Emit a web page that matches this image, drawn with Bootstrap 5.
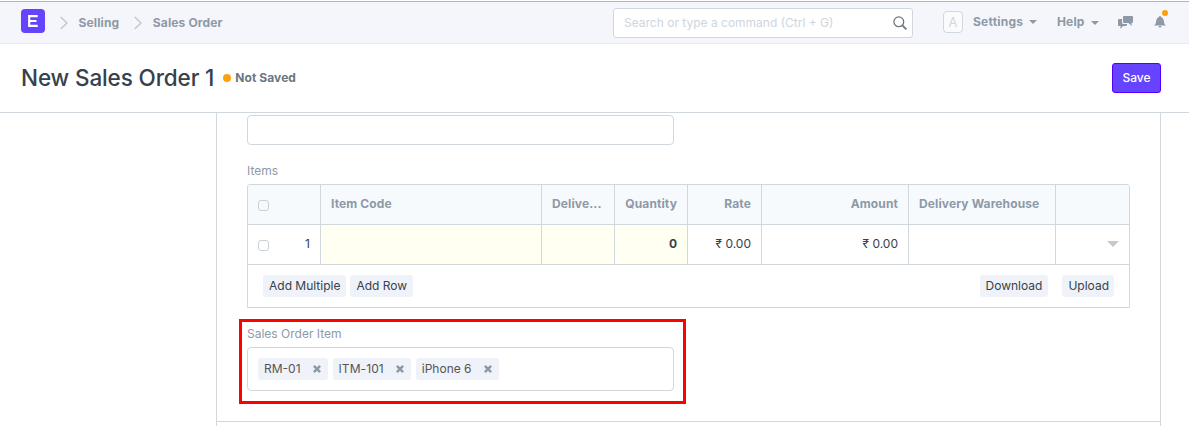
<!DOCTYPE html>
<html lang="en">
<head>
<meta charset="utf-8">
<meta name="viewport" content="width=device-width, initial-scale=1">
<title>New Sales Order 1</title>
<link href="https://cdn.jsdelivr.net/npm/bootstrap@5.3.0/dist/css/bootstrap.min.css" rel="stylesheet">
<style>
  :root { --line: #d1d8dd; --muted: #8d99a6; --ink: #36414c; --brand: #6644ff; }
  body { font: 12px/18px Inter, "Noto Sans", sans-serif; color: var(--ink); height: 426px; overflow: hidden; background: #fff; }
  .topbar { height: 43px; margin-top: 1px; padding: 0; border-top: 1px solid #b4b4b6; border-bottom: 1px solid #e8eaf0; background: #f5f6fb; flex-wrap: nowrap; font-weight: 700; color: var(--muted); }
  .logo { display: block; margin: -3px 15px 0 21px; }
  .crumb-link { color: inherit; text-decoration: none; letter-spacing: .14px; }
  .search-box { width: 300px; height: 30px; margin-right: 30px; border: 1px solid var(--line); border-radius: 3px; background: #fff; padding: 0 5px 0 10px; font-weight: 400; color: #ced6dd; }
  .user-tools { width: 246px; padding-bottom: 1px; }
  .avatar-box { width: 20px; height: 22px; border: 1px solid var(--line); border-radius: 4px; color: #d1d8dd; font-size: 13px; font-weight: 400; background: #fbfbfc; }
  .caret { width: 0; height: 0; border: 4px solid transparent; border-bottom: 0; border-top-color: currentColor; }
  .bell-dot { position: absolute; width: 6px; height: 6px; border-radius: 50%; background: #ffa00a; right: -2px; top: -6px; }
  .page-head { height: 69px; padding: 0 28px 0 21px; border-bottom: 1px solid var(--line); }
  .page-title { font-size: 22.5px; line-height: 30px; font-weight: 500; letter-spacing: -.13px; margin: 0; }
  .dot { width: 8px; height: 8px; border-radius: 50%; background: #ffa00a; margin: 0 4px 0 9px; }
  .status { font-weight: 700; color: #6c7680; letter-spacing: .07px; }
  .save-btn { --bs-btn-bg: var(--brand); --bs-btn-border-color: #5500ff; --bs-btn-color: #fff; width: 49px; height: 30px; padding: 0; border-radius: 3px; font-size: 12px; font-weight: 500; }
  .form-frame { width: 945px; margin-left: 216px; border: 1px solid var(--line); border-top: 0; border-bottom: 0; height: 313px; }
  .form-part { height: 309px; padding: 2px 30px 0; border-bottom: 1px solid var(--line); }
  .field-box { width: 427px; border: 1px solid var(--line); border-radius: 4px; background: #fff; }
  .field-label { color: var(--muted); line-height: 18px; }
  .grid-box { width: 883px; border: 1px solid var(--line); border-radius: 3px 3px 0 0; overflow: hidden; }
  .grid-line { display: grid; grid-template-columns: 73px 221px 73px 73px 74px 147px 147px 73px; height: 40px; border-bottom: 1px solid var(--line); }
  .grid-line > div { padding: 10px 10px 0; border-right: 1px solid var(--line); white-space: nowrap; }
  .grid-line > div:last-child { border-right: 0; }
  .grid-heading { background: #f7fafc; color: var(--muted); font-weight: 700; letter-spacing: .12px; }
  .tick { width: 11px; height: 11px; border: 1px solid #c9d0d6; border-radius: 3px; background: #fff; margin-top: 5px; }
  .grid-heading .tick { background: transparent; }
  .grid-line > .need { background: #fffff2; }
  .grid-foot { height: 42px; padding: 0 15px; }
  .soft-btn { height: 22px; padding: 0 6px; border: 0; border-radius: 3px; background: #eff2f8; font-size: 12px; line-height: 22px; color: var(--ink); }
  .highlight { width: 447px; height: 85px; border: 3px solid #f00; margin: 11px 0 0 -8px; padding: 3px 5px 0; }
  .pill-item { height: 22px; padding: 0 7px 0 6px; border-radius: 3px; background: #eff2f8; color: #555; }
  .pill-item svg { margin-left: 12px; stroke: var(--muted); stroke-width: 2.5; }
</style>
</head>
<body>
<nav class="navbar topbar d-flex align-items-center">
  <svg class="logo" width="24" height="24" viewBox="0 0 24 24"><rect width="24" height="24" rx="4" fill="#6644ff"/><path d="M16.700 7.100H8.200V16.900H16.700M8.200 12H15.500" fill="none" stroke="#fff" stroke-width="2.200"/></svg>
  <svg width="8" height="14" viewBox="0 0 8 14" fill="none" stroke="#c0c8d2" stroke-width="1.500"><path d="M.7 1 7 7 .7 13"/></svg>
  <a class="crumb-link" href="#" style="margin-left:10.500px">Selling</a>
  <svg style="margin-left:15px" width="8" height="14" viewBox="0 0 8 14" fill="none" stroke="#c0c8d2" stroke-width="1.500"><path d="M.7 1 7 7 .7 13"/></svg>
  <a class="crumb-link" href="#" style="margin-left:10.500px">Sales Order</a>
  <div class="search-box ms-auto d-flex align-items-center justify-content-between">
    <span>Search or type a command (Ctrl + G)</span>
    <svg width="14" height="14" viewBox="0 0 14 14" fill="none" stroke="#6c7680" stroke-width="1.300"><circle cx="5.800" cy="5.800" r="4.900"/><path d="m9.400 9.400 4 4" stroke-width="1.800"/></svg>
  </div>
  <div class="user-tools d-flex align-items-center">
    <div class="avatar-box d-flex align-items-center justify-content-center">A</div>
    <a class="crumb-link d-flex align-items-center" href="#" style="margin-left:10px;width:84px;letter-spacing:.24px"><span>Settings</span><span class="caret" style="margin-left:6px"></span></a>
    <a class="crumb-link d-flex align-items-center" href="#" style="width:61px"><span>Help</span><span class="caret" style="margin:1px 0 0 6px"></span></a>
    <svg width="15" height="13" viewBox="0 0 15 13" fill="currentColor"><path d="M6 0h8q1 0 1 1v5q0 1-1 1h-.5v3l-3-3H6q-1 0-1-1V1q0-1 1-1z"/><path d="M1 3h3v3.500q0 1.500 1.500 1.500H9v1q0 1-1 1H5l-2.500 3v-3H1q-1 0-1-1V4q0-1 1-1z"/></svg>
    <span class="position-relative d-flex" style="margin:-1px 0 0 21px"><svg width="12" height="12" viewBox="0 0 12 12" fill="currentColor"><path d="M6 0q1 0 1 1 2.500.6 2.700 3.500.2 3.500 2.300 5H0q2.100-1.500 2.300-5Q2.500 1.600 5 1q0-1 1-1zM4.500 10h3q0 1.500-1.500 1.500T4.500 10z"/></svg><span class="bell-dot"></span></span>
  </div>
</nav>
<header class="page-head d-flex align-items-center">
  <h1 class="page-title">New Sales Order 1</h1>
  <span class="dot"></span><span class="status">Not Saved</span>
  <button class="btn save-btn ms-auto">Save</button>
</header>
<main class="form-frame">
  <section class="form-part">
    <div class="field-box" style="height:30px"></div>
    <div class="field-label" style="margin:17px 0 4px">Items</div>
    <div class="grid-box">
      <div class="grid-line grid-heading">
        <div><div class="tick"></div></div><div>Item Code</div><div>Delive...</div><div class="text-end">Quantity</div><div class="text-end">Rate</div><div class="text-end">Amount</div><div>Delivery Warehouse</div><div></div>
      </div>
      <div class="grid-line">
        <div class="d-flex justify-content-between"><div class="tick"></div><span>1</span></div><div class="need"></div><div class="need"></div><div class="need text-end fw-bold">0</div><div class="text-end">₹ 0.00</div><div class="text-end">₹ 0.00</div><div></div><div class="d-flex justify-content-end"><span class="caret" style="border-width:6px 6px 0;margin-top:6px;color:#c8c8c8"></span></div>
      </div>
      <div class="grid-foot d-flex align-items-center">
        <button class="soft-btn">Add Multiple</button><button class="soft-btn ms-1">Add Row</button>
        <button class="soft-btn ms-auto">Download</button><button class="soft-btn" style="margin-left:14px;padding-right:5px">Upload</button>
      </div>
    </div>
    <div class="highlight">
      <div class="field-label">Sales Order Item</div>
      <div class="field-box d-flex align-items-center" style="height:44px;margin-top:4px;padding-left:10px;gap:5px">
        <span class="pill-item d-flex align-items-center">RM-01<svg width="8" height="8" viewBox="0 0 8 8"><path d="m.9.9 6.200 6.200M7.100.9.9 7.100"/></svg></span>
        <span class="pill-item d-flex align-items-center" style="letter-spacing:.08px">ITM-101<svg width="8" height="8" viewBox="0 0 8 8"><path d="m.9.9 6.200 6.200M7.100.9.9 7.100"/></svg></span>
        <span class="pill-item d-flex align-items-center">iPhone 6<svg width="8" height="8" viewBox="0 0 8 8"><path d="m.9.9 6.200 6.200M7.100.9.9 7.100"/></svg></span>
      </div>
    </div>
  </section>
</main>
<script src="https://cdn.jsdelivr.net/npm/bootstrap@5.3.0/dist/js/bootstrap.bundle.min.js"></script>
</body>
</html>
